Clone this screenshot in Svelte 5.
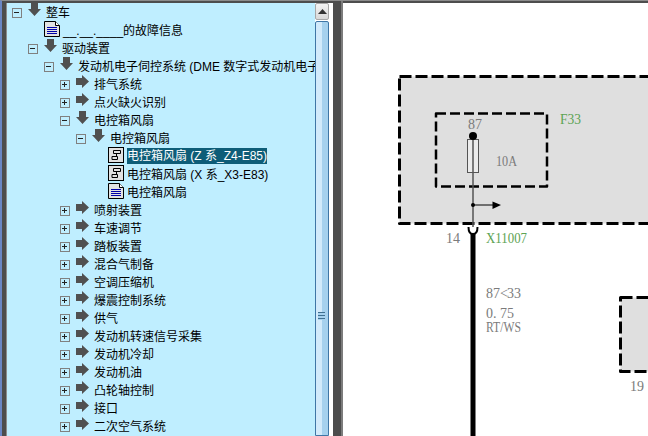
<script lang="ts">
  interface TreeRow {
    label: string
    depth: number
    kind: 'open' | 'closed' | 'doc' | 'chart'
    selected?: boolean
  }

  const rows: TreeRow[] = [
    { label: '整车', depth: 0, kind: 'open' },
    { label: '__.__.____的故障信息', depth: 1, kind: 'doc' },
    { label: '驱动装置', depth: 1, kind: 'open' },
    { label: '发动机电子伺控系统 (DME 数字式发动机电子伺控系统)', depth: 2, kind: 'open' },
    { label: '排气系统', depth: 3, kind: 'closed' },
    { label: '点火缺火识别', depth: 3, kind: 'closed' },
    { label: '电控箱风扇', depth: 3, kind: 'open' },
    { label: '电控箱风扇', depth: 4, kind: 'open' },
    { label: '电控箱风扇 (Z 系_Z4-E85)', depth: 5, kind: 'chart', selected: true },
    { label: '电控箱风扇 (X 系_X3-E83)', depth: 5, kind: 'chart' },
    { label: '电控箱风扇', depth: 5, kind: 'doc' },
    { label: '喷射装置', depth: 3, kind: 'closed' },
    { label: '车速调节', depth: 3, kind: 'closed' },
    { label: '踏板装置', depth: 3, kind: 'closed' },
    { label: '混合气制备', depth: 3, kind: 'closed' },
    { label: '空调压缩机', depth: 3, kind: 'closed' },
    { label: '爆震控制系统', depth: 3, kind: 'closed' },
    { label: '供气', depth: 3, kind: 'closed' },
    { label: '发动机转速信号采集', depth: 3, kind: 'closed' },
    { label: '发动机冷却', depth: 3, kind: 'closed' },
    { label: '发动机油', depth: 3, kind: 'closed' },
    { label: '凸轮轴控制', depth: 3, kind: 'closed' },
    { label: '接口', depth: 3, kind: 'closed' },
    { label: '二次空气系统', depth: 3, kind: 'closed' },
  ]
</script>

<div class="window">
  <div class="side">
    <div class="tree">
      {#each rows as row}
        <div class="row" style:padding-left="{5 + row.depth * 16}px">
          <span class="slot">
            {#if row.kind === 'open' || row.kind === 'closed'}
              <span class="expander">
                <svg width="8" height="8" viewBox="0 0 8 8">
                  <path d="M1 3.500h5" stroke="#222" fill="none" />
                  {#if row.kind === 'closed'}
                    <path d="M3.500 1v5" stroke="#222" fill="none" />
                  {/if}
                </svg>
              </span>
            {/if}
          </span>

          {#if row.kind === 'open'}
            <svg class="arrow" width="13" height="13" viewBox="0 0 13 13">
              <path d="M3 0h7v6h3l-6.500 7L0 6h3z" fill="#505050" />
            </svg>
          {:else if row.kind === 'closed'}
            <svg class="arrow" width="13" height="13" viewBox="0 0 13 13">
              <path d="M0 3h6V0l7 6.500L6 13v-3H0z" fill="#505050" />
            </svg>
          {:else if row.kind === 'doc'}
            <svg class="leaf" width="16" height="16" viewBox="0 0 16 16">
              <path d="M.5.5h11l4 4v11H.5z" fill="#e2e2e2" stroke="#000" />
              <path d="M11.500.5v4h4" fill="#fff" stroke="#000" />
              <path d="M3 6.500h10M3 8.500h10M3 10.500h10M3 12.500h10" stroke="#0000a8" />
            </svg>
          {:else}
            <svg class="leaf" width="16" height="16" viewBox="0 0 16 16">
              <rect x=".5" y=".5" width="15" height="15" fill="#e2e2e2" stroke="#000" />
              <path d="M5.500 3.500h7v3h-7zM8.500 6.500v3M4 9.500h5.500v3H4z" fill="none" stroke="#000" />
            </svg>
          {/if}

          <span class="label" class:selected={row.selected}>{row.label}</span>
        </div>
      {/each}
    </div>

    <div class="scrollbar">
      <div class="scroll-up">
        <svg width="9" height="5" viewBox="0 0 9 5">
          <path d="M4.500 0L9 5H0z" fill="#333" />
        </svg>
      </div>
      <div class="scroll-thumb">
        <div class="grip"></div>
      </div>
    </div>
  </div>

  <div class="divider"></div>

  <svg class="diagram" viewBox="343 3 305 433">
    <rect x="399.500" y="76.500" width="300" height="147" class="box outer" />
    <rect x="436" y="113.500" width="111" height="73" class="box inner" />

    <rect x="467.500" y="139.500" width="11" height="33" class="fuse" />
    <path d="M473 136V227" class="wire" />
    <circle cx="473" cy="136" r="4" />
    <circle cx="473" cy="205" r="2" />
    <path d="M473 205H494" class="branch" />
    <path d="M492.500 201.500L501 205L492.500 209z" />
    <path d="M468.500 227c0 5 2 7 4.500 7s4.500-2 4.500-7" class="socket" />
    <path d="M473 233V436" class="main-wire" />

    <g class="labels">
      <text x="468" y="129">87</text>
      <text x="496" y="166" textLength="21" lengthAdjust="spacingAndGlyphs">10A</text>
      <text x="560" y="124" class="green" textLength="21" lengthAdjust="spacingAndGlyphs">F33</text>
      <text x="446" y="243">14</text>
      <text x="486" y="243" class="green" textLength="41" lengthAdjust="spacingAndGlyphs">X11007</text>
      <text x="486 493 500 507 514" y="298">87&lt;33</text>
      <text x="486 493 500 507" y="318">0.75</text>
      <text x="486" y="332" textLength="35" lengthAdjust="spacingAndGlyphs">RT/WS</text>
      <text x="630" y="391">19</text>
    </g>

    <rect x="620.500" y="297.500" width="80" height="74" class="box outer" />
  </svg>
</div>

<style>
  :global(body) {
    margin: 0;
  }

  .window {
    display: flex;
    width: 648px;
    height: 436px;
    overflow: hidden;
    background: #4d4d4d;
    box-sizing: border-box;
    border-left: 2px solid #6a86c4;
    border-top: 1px solid #8c8c8c;
    font-family: 'Liberation Sans', 'Noto Sans CJK SC', sans-serif;
  }

  .side {
    display: flex;
    flex: none;
    width: 327px;
    margin-top: 2px;
    margin-left: 4px;
    border-left: 1px solid #8c8c8c;
    box-sizing: border-box;
    background: #fff;
  }

  .tree {
    flex: none;
    width: 308px;
    overflow: hidden;
    background: #bfeeff;
    color: #000;
    font-size: 12px;
  }

  .row {
    display: flex;
    height: 18px;
    box-sizing: border-box;
    white-space: nowrap;
  }

  .slot {
    flex: none;
    width: 16px;
    padding-top: 5px;
    box-sizing: border-box;
  }

  .expander {
    display: flex;
    align-items: center;
    justify-content: center;
    width: 10px;
    height: 10px;
    box-sizing: border-box;
    border: 1px solid #808080;
  }

  .arrow {
    flex: none;
    margin-right: 5px;
  }

  .leaf {
    flex: none;
    margin-right: 3px;
  }

  .label {
    height: 16px;
    margin-top: 1px;
    line-height: 18px;
  }

  .label.selected {
    line-height: 16px;
    background: #0e5d78;
    color: #fff;
  }

  .scrollbar {
    display: flex;
    flex: none;
    flex-direction: column;
    gap: 1px;
    width: 14px;
  }

  .scroll-up {
    display: flex;
    align-items: center;
    justify-content: center;
    flex: none;
    height: 17px;
    box-sizing: border-box;
    border: 1px solid #a8a8a8;
    border-radius: 2px;
    background: linear-gradient(#f4f4f4, #d8d8d8);
  }

  .scroll-thumb {
    position: relative;
    flex: 1;
    box-sizing: border-box;
    border: 1px solid #3f76a6;
    border-radius: 2px 2px 0 0;
    background: linear-gradient(90deg, #d2eafb 0 50%, #a6d1ee 50% 100%);
  }

  .grip {
    position: absolute;
    top: 290px;
    left: 2px;
    width: 7px;
    height: 8px;
    background: repeating-linear-gradient(#3f6f90 0 1px, #a6d1ee 1px 3px);
  }

  .divider {
    flex: none;
    width: 8px;
    box-sizing: content-box;
    border-right: 2px solid #7c7c7c;
  }

  .diagram {
    display: block;
    flex: none;
    width: 305px;
    height: 433px;
    margin-top: 2px;
    background: #fff;
  }

  .labels {
    opacity: 0.99;
  }

  .labels text {
    font-family: 'Liberation Serif', serif;
    font-size: 14px;
    fill: #7a7a7a;
  }

  .labels text.green {
    fill: #5ba352;
  }

  .box {
    fill: #dfdfdf;
    stroke: #000;
    stroke-linejoin: round;
  }

  .outer {
    stroke-width: 3;
    stroke-dasharray: 12 4;
  }

  .inner {
    stroke-width: 2.500;
    stroke-dasharray: 10 4;
  }

  .fuse {
    fill: #ececec;
    stroke: #555;
  }

  .wire {
    fill: none;
    stroke: #555;
    stroke-width: 1.500;
  }

  .branch {
    fill: none;
    stroke: #000;
  }

  .socket {
    fill: #fff;
    stroke: #000;
    stroke-width: 2;
  }

  .main-wire {
    fill: none;
    stroke: #000;
    stroke-width: 5;
  }
</style>
